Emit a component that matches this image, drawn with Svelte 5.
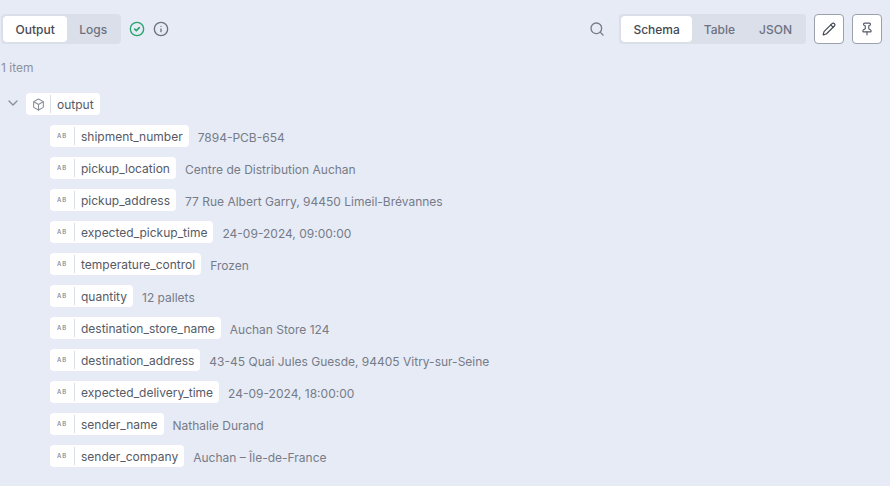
<script>
	const fields = [
		['shipment_number', '7894-PCB-654'],
		['pickup_location', 'Centre de Distribution Auchan'],
		['pickup_address', '77 Rue Albert Garry, 94450 Limeil-Brévannes'],
		['expected_pickup_time', '24-09-2024, 09:00:00'],
		['temperature_control', 'Frozen'],
		['quantity', '12 pallets'],
		['destination_store_name', 'Auchan Store 124'],
		['destination_address', '43-45 Quai Jules Guesde, 94405 Vitry-sur-Seine'],
		['expected_delivery_time', '24-09-2024, 18:00:00'],
		['sender_name', 'Nathalie Durand'],
		['sender_company', 'Auchan – Île-de-France']
	];
</script>

<div class="panel">
	<header class="toolbar">
		<div class="tabs run">
			<span class="tab active">Output</span>
			<span class="tab">Logs</span>
		</div>
		<svg class="status" viewBox="0 0 24 24" width="16" height="16" fill="none" stroke="#27a36b" stroke-width="2" stroke-linecap="round" stroke-linejoin="round">
			<circle cx="12" cy="12" r="10" />
			<path d="m8.500 12.200 2.500 2.300 4.500-4.500" stroke-width="2.400" />
		</svg>
		<svg class="info" viewBox="0 0 24 24" width="16" height="16" fill="none" stroke="#6c7280" stroke-width="2" stroke-linecap="round" stroke-linejoin="round">
			<circle cx="12" cy="12" r="10" />
			<path d="M12 16v-4M12 8h.01" />
		</svg>
		<div class="spacer"></div>
		<svg class="search" viewBox="0 0 24 24" width="16" height="16" fill="none" stroke="#767b88" stroke-width="2" stroke-linecap="round" stroke-linejoin="round">
			<circle cx="11" cy="11" r="8" />
			<path d="m21 21-4.300-4.300" />
		</svg>
		<div class="tabs views">
			<span class="tab active">Schema</span>
			<span class="tab">Table</span>
			<span class="tab">JSON</span>
		</div>
		<button type="button" class="icon-btn" aria-label="Edit">
			<svg viewBox="0 0 24 24" width="14" height="14" fill="none" stroke="#444954" stroke-width="2" stroke-linecap="round" stroke-linejoin="round">
				<path d="M21.174 6.812a1 1 0 0 0-3.986-3.987L3.842 16.174a2 2 0 0 0-.5.83l-1.321 4.352a.5.5 0 0 0 .623.622l4.353-1.32a2 2 0 0 0 .83-.497z" />
				<path d="m15 5 4 4" />
			</svg>
		</button>
		<button type="button" class="icon-btn" aria-label="Pin">
			<svg viewBox="0 0 24 24" width="14" height="14" fill="none" stroke="#555a66" stroke-width="2" stroke-linecap="round" stroke-linejoin="round">
				<path d="M12 17v5" />
				<path d="M9 10.760a2 2 0 0 1-1.110 1.790l-1.780.9A2 2 0 0 0 5 15.240V16a1 1 0 0 0 1 1h12a1 1 0 0 0 1-1v-.76a2 2 0 0 0-1.110-1.790l-1.780-.9A2 2 0 0 1 15 10.760V7a1 1 0 0 1 1-1 2 2 0 0 0 0-4H8a2 2 0 0 0 0 4 1 1 0 0 1 1 1z" />
			</svg>
		</button>
	</header>

	<div class="count">1 item</div>

	<div class="tree">
		<div class="root">
			<svg class="chevron" viewBox="0 0 24 24" width="16" height="16" fill="none" stroke="#8a8f9c" stroke-width="2" stroke-linecap="round" stroke-linejoin="round">
				<path d="m6 9 6 6 6-6" />
			</svg>
			<div class="pill">
				<span class="type">
					<svg viewBox="0 0 24 24" width="13" height="13" fill="none" stroke="#8b8f9a" stroke-width="2" stroke-linecap="round" stroke-linejoin="round">
						<path d="M21 8a2 2 0 0 0-1-1.730l-7-4a2 2 0 0 0-2 0l-7 4A2 2 0 0 0 3 8v8a2 2 0 0 0 1 1.730l7 4a2 2 0 0 0 2 0l7-4A2 2 0 0 0 21 16Z" />
						<path d="m3.300 7 8.700 5 8.700-5M12 22V12" />
					</svg>
				</span>
				<span class="name">output</span>
			</div>
		</div>
		{#each fields as [name, value]}
			<div class="row">
				<div class="pill">
					<span class="type"><span class="ab">AB</span></span>
					<span class="name">{name}</span>
				</div>
				<span class="value">{value}</span>
			</div>
		{/each}
	</div>
</div>

<style>
	:global(body) {
		background: #e7ebf5;
	}

	.panel {
		height: 486px;
		overflow: hidden;
		font-family: Inter, 'Liberation Sans', sans-serif;
		font-size: 12px;
		color: #555a66;
	}

	.toolbar {
		display: flex;
		align-items: center;
		height: 30px;
		padding: 14px 8px 0 1px;
	}

	.tabs {
		display: flex;
		height: 30px;
		box-sizing: border-box;
		padding: 2px;
		border-radius: 4px;
		background: #dbdfea;
	}

	.tab {
		display: flex;
		align-items: center;
		padding: 0 12px;
		border-radius: 4px;
		font-weight: 500;
		color: #6c7280;
	}

	.tab.active {
		background: #fff;
		color: #444954;
	}

	.run .active {
		padding: 0 12.5px;
	}

	.status {
		margin-left: 7.5px;
	}

	.info {
		margin-left: 8px;
	}

	.spacer {
		flex: 1;
	}

	.views {
		margin-left: 14px;
	}

	.icon-btn {
		display: flex;
		align-items: center;
		justify-content: center;
		width: 30px;
		height: 30px;
		margin-left: 8px;
		padding: 0;
		border: 1px solid #9aa0ae;
		border-radius: 4px;
		background: #fff;
	}

	.count {
		margin-top: 16px;
		padding-left: 1px;
		line-height: 15px;
		color: #8d919d;
	}

	.tree {
		margin-top: 18px;
		padding-left: 5px;
	}

	.root {
		display: flex;
		align-items: center;
		height: 22px;
	}

	.chevron {
		margin: -2px 5px 0 0;
	}

	.row {
		display: flex;
		align-items: center;
		height: 22px;
		margin-top: 10px;
		padding-left: 45px;
	}

	.pill {
		display: flex;
		align-items: center;
		height: 22px;
		border-radius: 4px;
		background: #fff;
	}

	.type {
		display: flex;
		align-items: center;
		justify-content: center;
		width: 25px;
		height: 18px;
		border-right: 1px solid #dbdfea;
		box-sizing: border-box;
	}

	.ab {
		margin-top: -1px;
		font-size: 6px;
		font-weight: 500;
		letter-spacing: 1px;
		color: #7d828f;
	}

	.name {
		padding: 0 6px;
		color: #555a66;
	}

	.value {
		margin-left: 9px;
		padding-top: 2px;
		color: #767b88;
	}
</style>
